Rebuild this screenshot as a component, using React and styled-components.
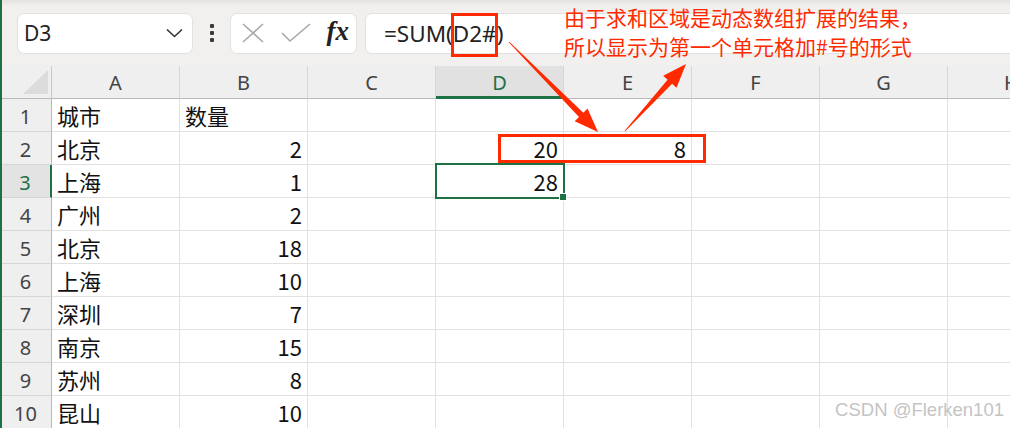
import React from 'react';
import styled, { createGlobalStyle, css } from 'styled-components';

const GlobalStyle = createGlobalStyle`
    html, body {
        margin: 0;
        padding: 0;
        background: #ffffff;
        overflow: hidden;
    }
`;

const CELL_FONT = `"Noto Sans CJK SC", "Noto Sans", sans-serif`;
const UI_FONT = `"Noto Sans", "Noto Sans CJK SC", sans-serif`;
const GREEN = '#1e7145';
const RED = '#ff2a00';

const Page = styled.div`
    position: relative;
    width: 1010px;
    height: 428px;
    overflow: hidden;
    background: #ffffff;

    &::after {
        content: '';
        position: absolute;
        left: 0;
        top: 0;
        bottom: 0;
        width: 2px;
        background: ${GREEN};
        z-index: 5;
    }
`;

const Toolbar = styled.div`
    height: 66px;
    box-sizing: border-box;
    display: flex;
    align-items: center;
    padding-left: 17px;
    background: linear-gradient(#e4e3e2 0, #f1f0ef 6px, #f1f0ef 100%);
`;

const Box = styled.div`
    height: 41px;
    box-sizing: border-box;
    background: #ffffff;
    border: 1px solid #e2e1e0;
    border-radius: 7px;
    display: flex;
    align-items: center;
`;

const NameBox = styled(Box)`
    width: 176px;
    justify-content: space-between;
    padding: 0 9px 0 6px;
    font-family: ${UI_FONT};
    font-size: 21px;
    color: #222;
`;

const Dots = styled.div`
    width: 37px;
    display: flex;
    flex-direction: column;
    align-items: center;
    gap: 3px;

    span {
        width: 4px;
        height: 4px;
        background: #3a3a3a;
        border-radius: 1px;
    }
`;

const FxBox = styled(Box)`
    width: 127px;
    padding: 0 7px 0 10px;
    justify-content: space-between;
`;

const FxLabel = styled.span`
    font-family: "Liberation Serif", "DejaVu Serif", serif;
    font-style: italic;
    font-weight: bold;
    font-size: 27px;
    color: #222;
    line-height: 1;
    padding-bottom: 3px;
`;

const FormulaBox = styled(Box)`
    flex: 1;
    margin-left: 8px;
    margin-right: -12px;
    padding-left: 18px;
    font-family: ${UI_FONT};
    font-size: 22.5px;
    color: #222;
`;

const Mark = styled.span`
    position: relative;

    &::after {
        content: '';
        position: absolute;
        left: -2px;
        right: -1px;
        top: -5px;
        bottom: -8px;
        border: 3px solid ${RED};
    }
`;

const Grid = styled.div`
    display: grid;
    grid-template-columns: 52px repeat(8, 128px);
    grid-auto-rows: 33px;
`;

const Corner = styled.div`
    position: relative;
    background: #efefef;
    border-right: 1px solid #c8c8c8;
    border-bottom: 1px solid #b9b9b9;

    &::after {
        content: '';
        position: absolute;
        right: 3px;
        bottom: 4px;
        width: 0;
        height: 0;
        border-left: 25px solid transparent;
        border-bottom: 24px solid #dcdcdc;
    }
`;

const ColHeader = styled.div`
    display: flex;
    align-items: center;
    justify-content: center;
    background: ${(p) => (p.$active ? '#e1e1e1' : '#efefef')};
    border-right: 1px solid #d6d6d6;
    border-bottom: ${(p) => (p.$active ? `3px solid ${GREEN}` : '1px solid #b9b9b9')};
    font-family: ${UI_FONT};
    font-size: 20px;
    color: ${(p) => (p.$active ? GREEN : '#444')};
    padding-top: ${(p) => (p.$active ? '2px' : '0')};
`;

const RowHeader = styled.div`
    display: flex;
    align-items: center;
    justify-content: center;
    background: ${(p) => (p.$active ? '#e3e3e3' : '#efefef')};
    border-right: ${(p) => (p.$active ? `2px solid ${GREEN}` : '1px solid #b9b9b9')};
    border-bottom: 1px solid #d6d6d6;
    font-family: ${UI_FONT};
    font-size: 20px;
    color: ${(p) => (p.$active ? GREEN : '#444')};
    padding-top: 2px;
`;

const Cell = styled.div`
    position: relative;
    display: flex;
    align-items: flex-end;
    justify-content: ${(p) => (p.$num ? 'flex-end' : 'flex-start')};
    padding: 0 5px 1px 5px;
    border-right: 1px solid #e1e1e1;
    border-bottom: 1px solid #e1e1e1;
    font-family: ${CELL_FONT};
    font-size: 22px;
    line-height: 30px;
    color: #111;

    ${(p) =>
        p.$selected &&
        css`
            &::after {
                content: '';
                position: absolute;
                left: -1px;
                top: -2px;
                right: -2px;
                bottom: -2px;
                border: 2px solid ${GREEN};
                z-index: 2;
            }
            &::before {
                content: '';
                position: absolute;
                right: -4px;
                bottom: -4px;
                width: 6px;
                height: 6px;
                background: ${GREEN};
                border: 1px solid #fff;
                z-index: 3;
            }
        `}
`;

const RangeBox = styled.div`
    position: absolute;
    left: 498px;
    top: 134px;
    width: 208px;
    height: 29px;
    box-sizing: border-box;
    border: 3px solid ${RED};
    z-index: 4;
`;

const Note = styled.div`
    position: absolute;
    left: 564px;
    top: 3px;
    font-family: "Noto Sans CJK SC", sans-serif;
    font-size: 21px;
    line-height: 29px;
    color: ${RED};
    z-index: 4;
`;

const Arrows = styled.svg`
    position: absolute;
    left: 0;
    top: 0;
    pointer-events: none;
    z-index: 4;
`;

const Watermark = styled.div`
    position: absolute;
    right: 6px;
    bottom: 7px;
    font-family: "Liberation Sans", sans-serif;
    font-size: 18.5px;
    color: #c4c4c4;
    z-index: 4;
`;

const cols = ['A', 'B', 'C', 'D', 'E', 'F', 'G', 'H'];

const rows = [
    ['城市', '数量'],
    ['北京', 2, '', 20, 8],
    ['上海', 1, '', 28],
    ['广州', 2],
    ['北京', 18],
    ['上海', 10],
    ['深圳', 7],
    ['南京', 15],
    ['苏州', 8],
    ['昆山', 10],
];

function arrowPoints(x1, y1, x2, y2) {
    const head = 24;
    const headW = 9;
    const neckW = 3;
    const tailW = 0.4;
    const dx = x2 - x1;
    const dy = y2 - y1;
    const len = Math.hypot(dx, dy);
    const ux = dx / len;
    const uy = dy / len;
    const nx = -uy;
    const ny = ux;
    const bx = x2 - ux * head;
    const by = y2 - uy * head;
    const pts = [
        [x1 + nx * tailW, y1 + ny * tailW],
        [bx + nx * neckW, by + ny * neckW],
        [bx + nx * headW, by + ny * headW],
        [x2, y2],
        [bx - nx * headW, by - ny * headW],
        [bx - nx * neckW, by - ny * neckW],
        [x1 - nx * tailW, y1 - ny * tailW],
    ];
    return pts.map((p) => p.map((v) => v.toFixed(1)).join(',')).join(' ');
}

const App = () => {
    return (
        <Page>
            <GlobalStyle />
            <Toolbar>
                <NameBox>
                    <span>D3</span>
                    <svg width="17" height="10" viewBox="0 0 17 10">
                        <path d="M1 1.5 L8.5 8.5 L16 1.5" fill="none" stroke="#333" strokeWidth="1.6" />
                    </svg>
                </NameBox>
                <Dots>
                    <span />
                    <span />
                    <span />
                </Dots>
                <FxBox>
                    <svg width="24" height="20" viewBox="0 0 24 20">
                        <path d="M2 1 L22 19 M22 1 L2 19" stroke="#a8a8a8" strokeWidth="1.6" fill="none" />
                    </svg>
                    <svg width="30" height="20" viewBox="0 0 30 20">
                        <path d="M1 10 L9 18 L29 1" stroke="#a8a8a8" strokeWidth="1.6" fill="none" />
                    </svg>
                    <FxLabel>fx</FxLabel>
                </FxBox>
                <FormulaBox>
                    <span>
                        =SUM(<Mark>D2#</Mark>)
                    </span>
                </FormulaBox>
            </Toolbar>

            <Grid>
                <Corner />
                {cols.map((c) => (
                    <ColHeader key={c} $active={c === 'D'}>
                        {c}
                    </ColHeader>
                ))}
                {rows.map((r, i) => (
                    <React.Fragment key={i}>
                        <RowHeader $active={i === 2}>{i + 1}</RowHeader>
                        {cols.map((c, j) => {
                            const v = r[j];
                            return (
                                <Cell
                                    key={c}
                                    $num={typeof v === 'number'}
                                    $selected={i === 2 && c === 'D'}
                                >
                                    {v}
                                </Cell>
                            );
                        })}
                    </React.Fragment>
                ))}
            </Grid>

            <RangeBox />
            <Note>
                <div>由于求和区域是动态数组扩展的结果，</div>
                <div>所以显示为第一个单元格加#号的形式</div>
            </Note>
            <Arrows width="1010" height="428">
                <polygon points={arrowPoints(509, 42, 598, 132)} fill={RED} />
                <polygon points={arrowPoints(625, 131, 686, 64)} fill={RED} />
            </Arrows>
            <Watermark>CSDN @Flerken101</Watermark>
        </Page>
    );
};

export default App;
